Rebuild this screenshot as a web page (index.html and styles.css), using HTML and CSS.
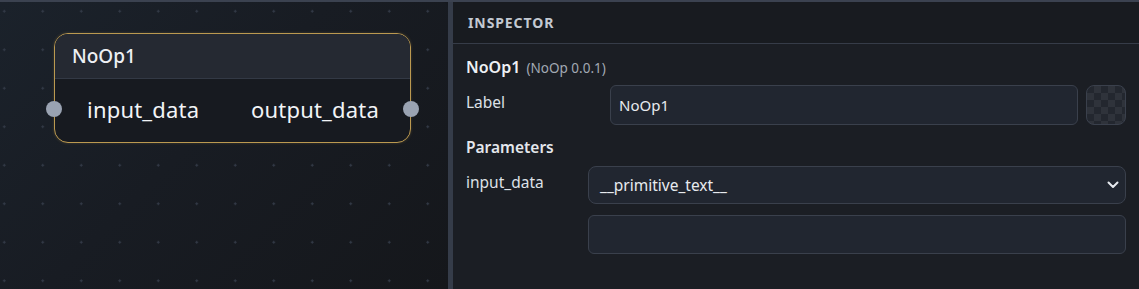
FILE: index.html
```html
<!DOCTYPE html>
<html lang="en">
<head>
    <meta charset="UTF-8">
    <meta name="viewport" content="width=device-width, initial-scale=1.0">
    <title>Node Inspector</title>
    <link rel="stylesheet" href="styles.css">
</head>
<body>
    <div class="app">
        <div class="canvas">
            <div class="node">
                <div class="node-header">NoOp1</div>
                <div class="node-body">
                    <span class="handle handle-in"></span>
                    <span class="port">input_data</span>
                    <span class="port">output_data</span>
                    <span class="handle handle-out"></span>
                </div>
            </div>
        </div>
        <div class="divider"></div>
        <div class="panel">
            <div class="panel-header">INSPECTOR</div>
            <div class="panel-body">
                <div class="title">NoOp1 <span class="version">(NoOp 0.0.1)</span></div>
                <div class="row row-label">
                    <div class="field-label">Label</div>
                    <div class="input">NoOp1</div>
                    <div class="swatch"></div>
                </div>
                <div class="section">Parameters</div>
                <div class="row row-param">
                    <div class="field-label param-label">input_data</div>
                    <div class="stack">
                        <div class="input select">
                            <span>__primitive_text__</span>
                            <svg class="chevron" width="12" height="8" viewBox="0 0 12 8"><path d="M1.5 1.5 6 6l4.5-4.5" fill="none" stroke="#e6e9ee" stroke-width="2" stroke-linecap="round" stroke-linejoin="round"/></svg>
                        </div>
                        <div class="input empty"></div>
                    </div>
                </div>
            </div>
        </div>
    </div>
</body>
</html>
```

FILE: styles.css
```css
html, body {
    margin: 0;
    height: 100%;
    background-color: #15181d;
}
body {
    border-top: 2px solid #3b4250;
    box-sizing: border-box;
    font-family: "Noto Sans", "Open Sans", sans-serif;
    color: #e4e7ec;
}
.app {
    display: flex;
    height: 100%;
}
.canvas {
    width: 448px;
    flex-shrink: 0;
    position: relative;
    border-top-right-radius: 5px;
    background-color: #171b21;
    background-image:
        radial-gradient(circle, #333a47 1px, transparent 1.4px),
        linear-gradient(135deg, #1b222b 0%, #181c23 45%, #15171b 100%);
    background-size: 38.5px 38.5px, 100% 100%;
    background-position: -15px -10px, 0 0;
}
.node {
    position: absolute;
    left: 54px;
    top: 31px;
    width: 355px;
    height: 108px;
    border: 1.5px solid #bb9950;
    border-radius: 14px;
    background-color: #171a20;
    box-shadow: 0 0 3px rgba(200, 160, 80, 0.25);
}
.node-header {
    height: 45px;
    box-sizing: border-box;
    padding: 9px 0 0 17px;
    font-size: 19px;
    font-weight: 500;
    background-color: #252932;
    border-radius: 13px 13px 0 0;
    border-bottom: 1px solid #333945;
    color: #eef0f4;
}
.node-body {
    position: relative;
    display: flex;
    justify-content: space-between;
    align-items: center;
    height: 60px;
    padding: 0 31px 0 32px;
    font-size: 22px;
    letter-spacing: 0.2px;
    color: #f2f4f7;
}
.handle {
    position: absolute;
    top: 22px;
    width: 16px;
    height: 16px;
    border-radius: 50%;
    background-color: #9aa3b2;
}
.handle-in {
    left: -9px;
}
.handle-out {
    right: -9px;
}
.divider {
    width: 5px;
    flex-shrink: 0;
    background-color: #353c49;
}
.panel {
    flex: 1;
    background-color: #1b1e24;
}
.panel-header {
    height: 42px;
    box-sizing: border-box;
    padding: 11px 0 0 15px;
    font-size: 14px;
    font-weight: 700;
    letter-spacing: 0.9px;
    color: #c3c9d2;
    background-color: #181b20;
    border-bottom: 1px solid #363c48;
}
.panel-body {
    padding: 12px 13px 0 13px;
}
.title {
    font-size: 16px;
    font-weight: 600;
    color: #eef0f4;
}
.version {
    font-size: 13.5px;
    font-weight: 400;
    color: #a2a9b3;
    margin-left: 2px;
}
.row {
    display: flex;
}
.row-label {
    margin-top: 7px;
    align-items: flex-start;
}
.field-label {
    font-size: 15.5px;
    color: #dde1e7;
    padding-top: 6px;
}
.row-label .field-label {
    width: 144px;
}
.input {
    box-sizing: border-box;
    height: 40px;
    border: 1px solid #3a404c;
    border-radius: 6px;
    background-color: #212630;
    font-size: 15px;
    display: flex;
    align-items: center;
    padding: 0 8px;
    color: #e8ebef;
}
.row-label .input {
    flex: 1;
}
.swatch {
    width: 40px;
    height: 40px;
    margin-left: 8px;
    box-sizing: border-box;
    border: 1px solid #3a404c;
    border-radius: 8px;
    background-color: #23272f;
    background-image:
        linear-gradient(45deg, #2f333b 25%, transparent 25%, transparent 75%, #2f333b 75%),
        linear-gradient(45deg, #2f333b 25%, transparent 25%, transparent 75%, #2f333b 75%);
    background-size: 14px 14px;
    background-position: 0 0, 7px 7px;
}
.section {
    margin-top: 11px;
    font-size: 15.5px;
    font-weight: 600;
    color: #e4e7ec;
}
.row-param {
    margin-top: 8px;
}
.param-label {
    width: 122px;
    padding-top: 5px;
}
.stack {
    flex: 1;
    display: flex;
    flex-direction: column;
    gap: 11px;
}
.select {
    height: 38px;
    justify-content: space-between;
    padding: 0 6px 0 11px;
    font-size: 15.5px;
    border-radius: 8px;
}
.empty {
    height: 39px;
}
```
